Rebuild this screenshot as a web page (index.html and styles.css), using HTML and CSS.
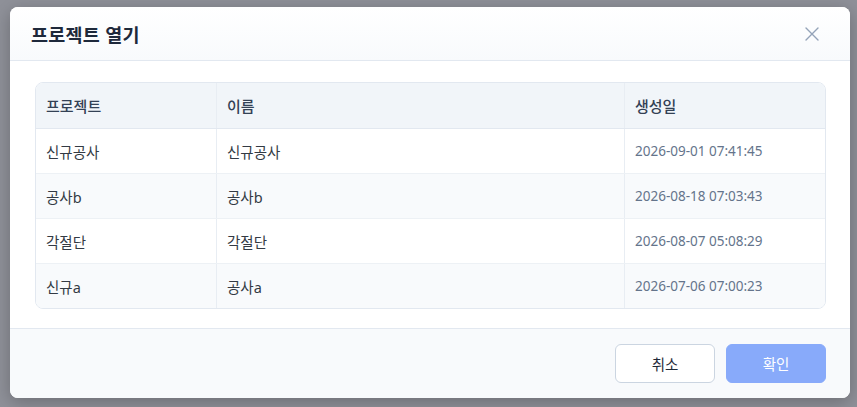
FILE: index.html
```html
<!DOCTYPE html>
<html lang="ko">
<head>
<meta charset="utf-8">
<title>프로젝트 열기</title>
<link rel="stylesheet" href="styles.css">
</head>
<body>
<div class="dialog">
  <div class="dlg-header">
    <h2 class="dlg-title">프로젝트 열기</h2>
    <button class="close-btn" aria-label="닫기">
      <svg width="14" height="14" viewBox="0 0 14 14"><path d="M1 1 L13 13 M13 1 L1 13" stroke="#94a3b8" stroke-width="1.4" fill="none" stroke-linecap="round"/></svg>
    </button>
  </div>
  <div class="dlg-body">
    <div class="table-wrap">
      <table class="proj-table">
        <thead>
          <tr><th class="c1">프로젝트</th><th class="c2">이름</th><th class="c3">생성일</th></tr>
        </thead>
        <tbody>
          <tr><td>신규공사</td><td>신규공사</td><td class="date">2026-09-01 07:41:45</td></tr>
          <tr><td>공사b</td><td>공사b</td><td class="date">2026-08-18 07:03:43</td></tr>
          <tr><td>각절단</td><td>각절단</td><td class="date">2026-08-07 05:08:29</td></tr>
          <tr><td>신규a</td><td>공사a</td><td class="date">2026-07-06 07:00:23</td></tr>
        </tbody>
      </table>
    </div>
  </div>
  <div class="dlg-footer">
    <button class="btn btn-cancel">취소</button>
    <button class="btn btn-ok">확인</button>
  </div>
</div>
</body>
</html>
```
FILE: styles.css
```css
html, body {
  margin: 0;
  padding: 0;
  height: 100%;
}
body {
  background: #8f9199;
  font-family: "Noto Sans", "Noto Sans CJK KR", sans-serif;
  padding: 7px 7px 0 10px;
  box-sizing: border-box;
  overflow: hidden;
}
.dialog {
  width: 840px;
  height: 391px;
  background: #ffffff;
  border-radius: 8px;
  box-shadow: 0 4px 18px rgba(0,0,0,0.25);
  display: flex;
  flex-direction: column;
  overflow: hidden;
}
.dlg-header {
  height: 53px;
  border-bottom: 1px solid #e2e8f0;
  background: linear-gradient(180deg, #ffffff 0%, #f8fafc 100%);
  display: flex;
  align-items: center;
  justify-content: space-between;
  padding: 0 31px 0 21px;
  flex-shrink: 0;
}
.dlg-title {
  margin: 0;
  font-size: 18.5px;
  font-weight: 700;
  color: #1e293b;
  font-family: "Noto Sans CJK KR", sans-serif;
  letter-spacing: 0.2px;
}
.close-btn {
  border: 0;
  background: transparent;
  padding: 0;
  width: 14px;
  height: 14px;
  display: flex;
  cursor: pointer;
}
.dlg-body {
  flex: 1;
  padding: 21px 24px 0 25px;
}
.table-wrap {
  border: 1px solid #e2e8f0;
  border-radius: 8px;
  overflow: hidden;
}
.proj-table {
  width: 100%;
  border-collapse: collapse;
  font-family: "Noto Sans", "Noto Sans CJK KR", sans-serif;
}
.proj-table th {
  background: #f1f5f9;
  height: 45px;
  text-align: left;
  font-weight: 500;
  font-size: 15px;
  color: #334155;
  padding: 0 10px;
  border-bottom: 1px solid #e2e8f0;
  font-family: "Noto Sans CJK KR", sans-serif;
}
.proj-table th + th,
.proj-table td + td {
  border-left: 1px solid #e8edf3;
}
.proj-table .c1 { width: 160px; }
.proj-table .c3 { width: 180px; }
.proj-table td {
  height: 44px;
  padding: 0 10px;
  font-size: 14.5px;
  color: #333a44;
  border-bottom: 1px solid #edf1f5;
}
.proj-table tbody tr:nth-child(even) td {
  background: #f8fafc;
}
.proj-table tbody tr:last-child td {
  border-bottom: 0;
}
.proj-table td.date {
  font-size: 13.5px;
  color: #64748b;
}
.dlg-footer {
  height: 69px;
  border-top: 1px solid #e2e8f0;
  background: #f8fafc;
  display: flex;
  align-items: center;
  justify-content: flex-end;
  gap: 11px;
  padding: 0 24px 0 0;
  flex-shrink: 0;
}
.btn {
  width: 100px;
  height: 39px;
  border-radius: 6px;
  font-size: 14.5px;
  font-family: "Noto Sans CJK KR", sans-serif;
  cursor: pointer;
}
.btn-cancel {
  background: #ffffff;
  border: 1px solid #cbd5e1;
  color: #1f2937;
}
.btn-ok {
  background: #88aafa;
  border: 1px solid #88aafa;
  color: #ffffff;
}
```
